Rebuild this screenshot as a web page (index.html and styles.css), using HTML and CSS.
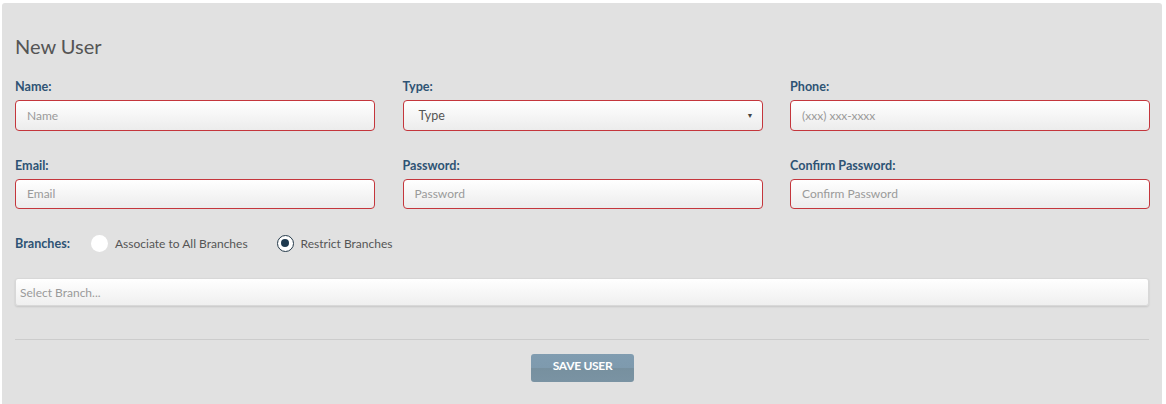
FILE: index.html
```html
<!DOCTYPE html>
<html>
<head>
<meta charset="utf-8">
<link rel="stylesheet" href="styles.css">
</head>
<body>
<div class="panel">
  <h2 class="title">New User</h2>
  <div class="grid">
    <div class="field">
      <label class="lbl">Name:</label>
      <div class="input"><span class="ph">Name</span></div>
    </div>
    <div class="field">
      <label class="lbl">Type:</label>
      <div class="input select"><span class="val">Type</span><span class="caret">&#9660;</span></div>
    </div>
    <div class="field">
      <label class="lbl">Phone:</label>
      <div class="input"><span class="ph">(xxx) xxx-xxxx</span></div>
    </div>
    <div class="field">
      <label class="lbl">Email:</label>
      <div class="input"><span class="ph">Email</span></div>
    </div>
    <div class="field">
      <label class="lbl">Password:</label>
      <div class="input"><span class="ph">Password</span></div>
    </div>
    <div class="field">
      <label class="lbl">Confirm Password:</label>
      <div class="input"><span class="ph">Confirm Password</span></div>
    </div>
  </div>
  <div class="branches">
    <span class="lbl">Branches:</span>
    <span class="radio"><span class="circle"></span>Associate to All Branches</span>
    <span class="radio"><span class="circle on"></span>Restrict Branches</span>
  </div>
  <div class="branch-select"><span class="ph">Select Branch...</span></div>
  <div class="rule"></div>
  <div class="actions"><button class="btn">SAVE USER</button></div>
</div>
</body>
</html>
```
FILE: styles.css
```css
html, body { margin: 0; padding: 0; background: #ffffff; }
body { font-family: Lato, "Open Sans", sans-serif; }
.panel {
  margin: 3px 0 0 2px;
  width: 1160px;
  height: 401px;
  box-sizing: border-box;
  background: #e1e1e1;
  border-radius: 3px 3px 0 0;
  padding: 31px 13px 0 13px;
}
.title {
  margin: 0;
  font-size: 20px;
  line-height: 24px;
  font-weight: 400;
  color: #555555;
}
.grid {
  margin-top: 21px;
  display: grid;
  grid-template-columns: 360px 360px 360px;
  column-gap: 27.5px;
  row-gap: 27px;
}
.field { display: flex; flex-direction: column; }
.lbl {
  font-size: 12.6px;
  font-weight: 700;
  line-height: 16px;
  color: #2e5374;
}
.field .lbl { margin-bottom: 5px; }
.input {
  height: 31px;
  box-sizing: border-box;
  border: 1px solid #c4363c;
  border-radius: 4px;
  background: linear-gradient(#ffffff, #ececec);
  display: flex;
  align-items: center;
  padding: 0 11px 1px 11px;
  font-size: 12px;
}
.grid .field:nth-child(n+4) .input { height: 30px; }
.ph { color: #9a9a9a; }
.select { padding-left: 15px; justify-content: space-between; }
.select .val { color: #555555; font-size: 12.5px; }
.caret { font-size: 7px; color: #444; margin-right: -3px; }
.branches {
  margin-top: 26px;
  height: 17px;
  display: flex;
  align-items: center;
}
.branches .lbl { width: 76px; }
.radio {
  display: flex;
  align-items: center;
  font-size: 12px;
  color: #555555;
  margin-right: 29px;
}
.circle {
  width: 17px;
  height: 17px;
  border-radius: 50%;
  background: #ffffff;
  box-sizing: border-box;
  margin-right: 7px;
  position: relative;
}
.circle.on { border: 1.5px solid #253a4a; }
.circle.on::after {
  content: "";
  position: absolute;
  left: 3px; top: 3px;
  width: 8px; height: 8px;
  border-radius: 50%;
  background: #1f3a4f;
}
.branch-select {
  margin-top: 26px;
  height: 28px;
  box-sizing: border-box;
  border: 1px solid #d8d8d8;
  border-radius: 3px;
  background: linear-gradient(#ffffff, #efefef);
  box-shadow: 0 1px 2px rgba(0,0,0,0.12);
  display: flex;
  align-items: center;
  padding: 0 4px;
  font-size: 12px;
}
.rule {
  margin-top: 33px;
  height: 1px;
  background: #cccccc;
}
.actions {
  margin-top: 14px;
  display: flex;
  justify-content: center;
}
.btn {
  width: 103px;
  height: 28px;
  border: none;
  border-radius: 3px;
  background: linear-gradient(#809cb0 0%, #7e9aae 50%, #77909f 50%, #7a93a3 100%);
  color: #ffffff;
  font-family: Lato, "Open Sans", sans-serif;
  font-weight: 700;
  font-size: 12px;
  letter-spacing: -0.3px;
  padding: 0 0 5px 0;
  margin-left: 1px;
}
```
